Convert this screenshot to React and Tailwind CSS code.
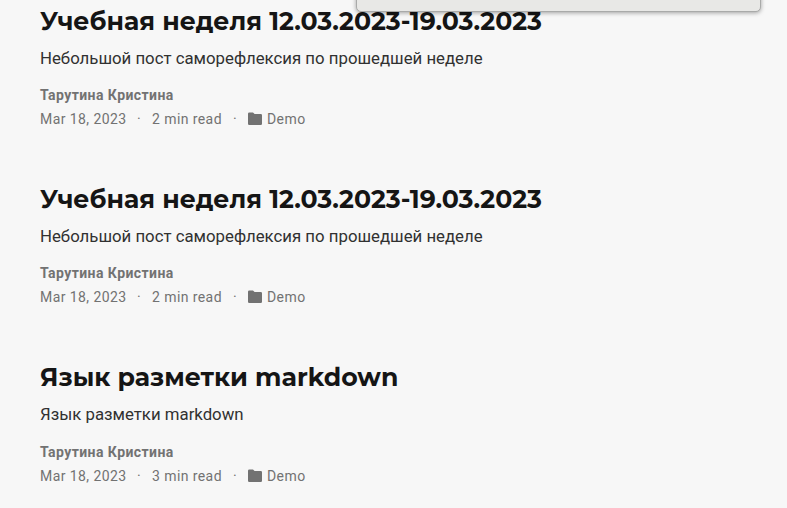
const posts = [
  {
    title: 'Учебная неделя 12.03.2023-19.03.2023',
    summary: 'Небольшой пост саморефлексия по прошедшей неделе',
    read: '2 min read',
  },
  {
    title: 'Учебная неделя 12.03.2023-19.03.2023',
    summary: 'Небольшой пост саморефлексия по прошедшей неделе',
    read: '2 min read',
  },
  {
    title: 'Язык разметки markdown',
    summary: 'Язык разметки markdown',
    read: '3 min read',
  },
];

function Folder() {
  return (
    <svg className="mb-px mr-[5px] h-[13px] w-[14px]" viewBox="0 0 14 13" fill="currentColor">
      <path d="M1.200 0.500H5L6.600 2H12.800Q14 2 14 3.200V11.700Q14 12.900 12.800 12.900H1.200Q0 12.900 0 11.700V1.700Q0 0.500 1.200 0.500Z" />
    </svg>
  );
}

function Post({ post }) {
  return (
    <article className="h-[178.200px] shrink-0">
      <h2 className="h-8 whitespace-nowrap font-['Montserrat','Inter',sans-serif] text-[25.200px] font-bold leading-8 text-[#151515]">
        {post.title}
      </h2>
      <p className="mt-[9px] h-6 whitespace-nowrap text-[16.800px] leading-6 text-[#313131]">{post.summary}</p>
      <div className="mt-[13.200px] h-6 text-[14px] font-bold leading-6 tracking-[0.42px]">{'Тарутина Кристина'}</div>
      <div className="flex h-6 items-center whitespace-nowrap text-[14px] leading-6 tracking-[0.42px]">
        <span className="w-[97px]">Mar 18, 2023</span>
        <span className="w-[15px]">·</span>
        <span className="w-[81px]">{post.read}</span>
        <span className="w-[15px]">·</span>
        <Folder />
        <span>Demo</span>
      </div>
    </article>
  );
}

export default function App() {
  return (
    <div className="relative h-[508px] w-full overflow-hidden bg-[#f7f7f7] font-['Roboto',sans-serif] text-[#727272]">
      <main className="flex flex-col px-10 pt-[5px]">
        {posts.map((post, i) => (
          <Post key={i} post={post} />
        ))}
      </main>
      <div className="absolute left-[356px] top-[-20px] h-8 w-[405px] rounded-[5px] border border-[#a9aaa9] bg-[#e8e8e6] shadow-[0_1px_4px_rgba(0,0,0,0.35)]" />
    </div>
  );
}
